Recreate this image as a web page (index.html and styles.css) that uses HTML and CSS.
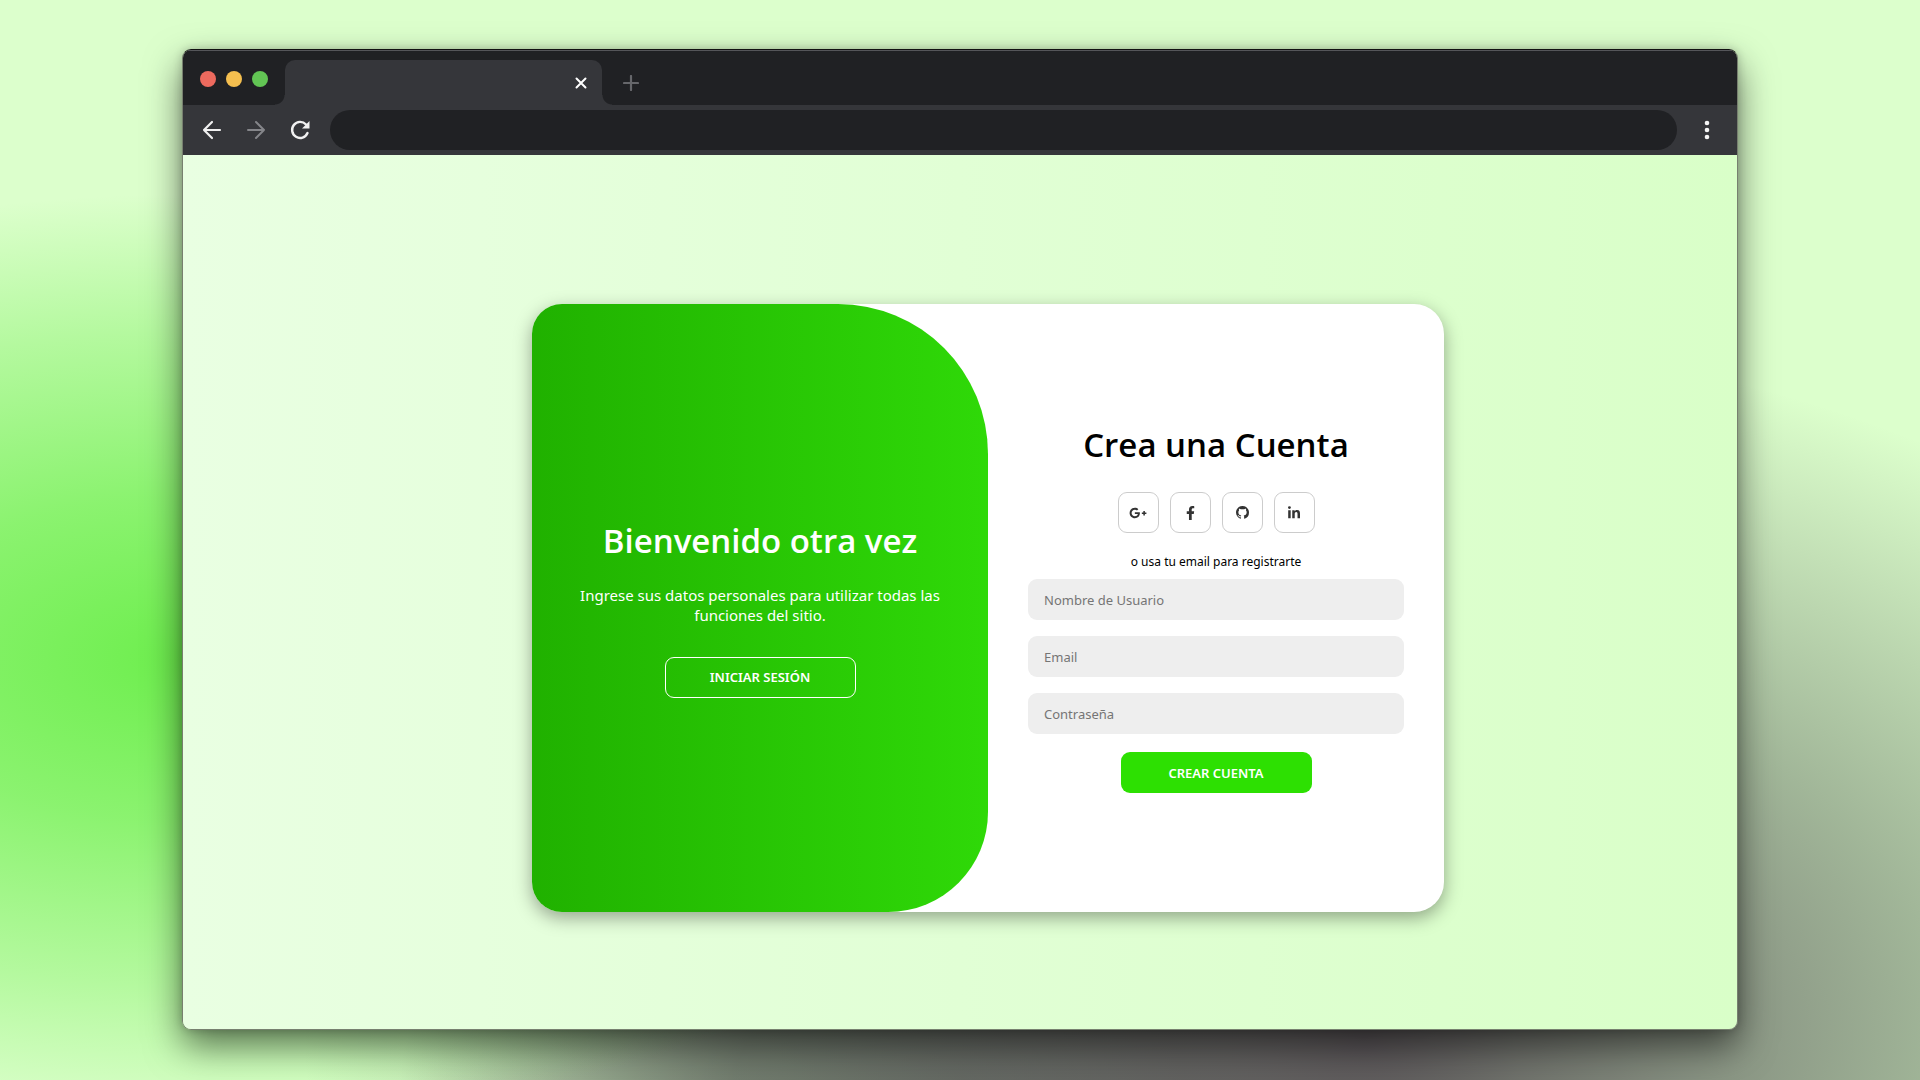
FILE: index.html
```html
<!DOCTYPE html>
<html lang="es">
<head>
<meta charset="utf-8">
<meta name="viewport" content="width=device-width, initial-scale=1">
<title>Crea una Cuenta</title>
<link rel="stylesheet" href="styles.css">
</head>
<body>
<div class="window">
  <header class="tabs">
    <div class="lights"><span class="light red"></span><span class="light yellow"></span><span class="light green"></span></div>
    <div class="tab">
      <button class="icon-button" type="button" aria-label="Cerrar pestaña"><svg width="12" height="12" viewBox="0 0 12 12"><path d="M1.500 1.500l9 9M10.500 1.500l-9 9" stroke="#fff" stroke-width="2" stroke-linecap="round"/></svg></button>
    </div>
    <button class="icon-button new-tab" type="button" aria-label="Nueva pestaña"><svg width="16" height="16" viewBox="0 0 16 16"><path d="M8 1v14M1 8h14" stroke="#66676b" stroke-width="2.200" stroke-linecap="round"/></svg></button>
  </header>
  <nav class="toolbar" aria-label="Navegación">
    <div class="nav-buttons">
      <button class="icon-button" type="button" aria-label="Atrás"><svg width="20" height="20" viewBox="0 0 20 20" fill="none" stroke="#f1f1f1" stroke-width="2.200" stroke-linecap="round" stroke-linejoin="round"><path d="M18 10H2M10 2L2 10l8 8"/></svg></button>
      <button class="icon-button" type="button" aria-label="Adelante"><svg width="20" height="20" viewBox="0 0 20 20" fill="none" stroke="#85868a" stroke-width="2" stroke-linecap="round" stroke-linejoin="round"><path d="M2 10h16M10 2l8 8-8 8"/></svg></button>
      <button class="icon-button" type="button" aria-label="Recargar"><svg width="20" height="20" viewBox="0 0 20 20"><path d="M16 4.500A8 8 0 1 0 17.500 13" fill="none" stroke="#f1f1f1" stroke-width="2.400" stroke-linecap="round"/><path d="M19.500 1v7.500H12z" fill="#f1f1f1"/></svg></button>
    </div>
    <input class="address" type="text" aria-label="Dirección">
    <button class="icon-button menu" type="button" aria-label="Menú"><svg width="6" height="20" viewBox="0 0 6 20" fill="#f5f5f5"><circle cx="3" cy="3" r="2.300"/><circle cx="3" cy="10" r="2.300"/><circle cx="3" cy="17" r="2.300"/></svg></button>
  </nav>
  <main class="page">
    <div class="card">
      <section class="welcome">
        <h1>Bienvenido otra vez</h1>
        <p>Ingrese sus datos personales para utilizar todas las funciones del sitio.</p>
        <button class="button outline" type="button">INICIAR SESIÓN</button>
      </section>
      <form class="signup">
        <h1>Crea una Cuenta</h1>
        <div class="social">
          <a href="#" aria-label="Google Plus"><svg width="18" height="14" viewBox="0 0 640 512"><path fill="#333" d="M386.061 228.496c1.834 9.692 3.143 19.384 3.143 31.956C389.204 370.205 315.599 448 204.800 448c-106.084 0-192-85.915-192-192s85.916-192 192-192c51.864 0 95.083 18.859 128.611 50.292l-52.126 50.030c-14.145-13.621-39.028-29.599-76.485-29.599-65.484 0-118.920 54.221-118.920 121.277 0 67.056 53.436 121.277 118.920 121.277 75.961 0 104.513-54.745 108.965-82.773H204.800v-66.009h181.261zm185.406 6.437V179.200h-56.001v55.733h-55.733v56.001h55.733v55.733h56.001v-55.733H627.200v-56.001h-55.733z"/></svg></a>
          <a href="#" aria-label="Facebook"><svg width="9" height="14" viewBox="0 0 320 512"><path fill="#333" d="M279.140 288l14.220-92.660h-88.910v-60.130c0-25.350 12.420-50.060 52.240-50.060h40.420V6.260S260.430 0 225.360 0c-73.220 0-121.080 44.380-121.080 124.720v70.620H22.890V288h81.390v224h100.170V288z"/></svg></a>
          <a href="#" aria-label="GitHub"><svg width="13" height="13" viewBox="0 0 16 16"><path fill="#333" d="M8 0C3.580 0 0 3.580 0 8c0 3.540 2.290 6.530 5.470 7.590.4.070.55-.17.55-.38 0-.19-.01-.82-.01-1.490-2.010.37-2.530-.49-2.690-.94-.09-.23-.48-.94-.82-1.130-.28-.15-.68-.52-.01-.53.63-.01 1.080.58 1.230.82.72 1.210 1.870.87 2.330.66.07-.52.28-.87.510-1.070-1.780-.2-3.640-.89-3.640-3.950 0-.87.310-1.590.82-2.150-.08-.2-.36-1.020.08-2.120 0 0 .67-.21 2.200.82.64-.18 1.320-.27 2-.27s1.360.09 2 .27c1.530-1.040 2.200-.82 2.200-.82.44 1.100.16 1.920.08 2.120.51.56.82 1.270.82 2.150 0 3.070-1.870 3.750-3.650 3.950.29.25.54.73.54 1.480 0 1.070-.01 1.930-.01 2.200 0 .21.15.46.55.38A8.010 8.010 0 0 0 16 8c0-4.420-3.580-8-8-8z"/></svg></a>
          <a href="#" aria-label="LinkedIn"><svg width="12" height="14" viewBox="0 0 448 512"><path fill="#333" d="M100.280 448H7.400V148.900h92.880zM53.790 108.100C24.090 108.100 0 83.500 0 53.800a53.790 53.790 0 0 1 107.580 0c0 29.700-24.100 54.300-53.790 54.300zM447.900 448h-92.680V302.400c0-34.700-.7-79.200-48.290-79.200-48.290 0-55.690 37.700-55.690 76.700V448h-92.780V148.900h89.080v40.800h1.300c12.400-23.500 42.690-48.300 87.880-48.300 94 0 111.280 61.900 111.280 142.300V448z"/></svg></a>
        </div>
        <p>o usa tu email para registrarte</p>
        <div class="fields">
          <input type="text" placeholder="Nombre de Usuario" aria-label="Nombre de Usuario">
          <input type="email" placeholder="Email" aria-label="Email">
          <input type="password" placeholder="Contraseña" aria-label="Contraseña">
        </div>
        <button class="button solid" type="button">CREAR CUENTA</button>
      </form>
    </div>
  </main>
</div>
</body>
</html>
```
FILE: styles.css
```css
* { box-sizing: border-box; }

body {
  margin: 0;
  min-height: 100vh;
  display: flex;
  padding: 49px 182px 50px;
  font-family: "Noto Sans", "Open Sans", sans-serif;
  background:
    radial-gradient(900px 465px at 10% 61%, #6dee4d, rgba(109, 238, 77, .73) 35%, rgba(109, 238, 77, .36) 70%, rgba(109, 238, 77, 0) 100%),
    radial-gradient(1060px 700px at 71% 96%, #5a5558, rgba(90, 88, 90, .62) 36%, rgba(90, 94, 90, .46) 54%, rgba(90, 94, 90, 0) 100%),
    radial-gradient(560px 300px at 50% 100%, rgba(80, 85, 80, .75), rgba(80, 85, 80, .65) 40%, rgba(80, 85, 80, 0) 100%),
    #dcffcc;
}

h1, p { margin: 0; }

.window {
  flex: 1;
  display: flex;
  flex-direction: column;
  border: 1px solid #77806f;
  border-top-color: #111;
  border-radius: 9px;
  overflow: hidden;
  box-shadow: 0 16px 36px rgba(0, 0, 0, .55), 0 0 10px rgba(0, 0, 0, .2);
}

.tabs {
  height: 55px;
  display: flex;
  align-items: flex-end;
  background: #202124;
  border-top: 1px solid #55565a;
}

.lights { display: flex; gap: 10px; padding: 0 17px 18px; }
.light { width: 16px; height: 16px; border-radius: 50%; }
.red { background: #ed6a5e; }
.yellow { background: #f5bf4f; }
.green { background: #62c554; }

.tab {
  position: relative;
  width: 317px;
  height: 45px;
  padding-right: 15px;
  display: flex;
  align-items: center;
  justify-content: flex-end;
  border-radius: 10px 10px 0 0;
  background: #35363a;
}
/* Curved feet where the tab meets the toolbar */
.tab::before, .tab::after {
  content: "";
  position: absolute;
  bottom: 0;
  width: 10px;
  height: 10px;
}
.tab::before { right: 100%; background: radial-gradient(circle at 0 0, transparent 9px, #35363a 10px); }
.tab::after { left: 100%; background: radial-gradient(circle at 100% 0, transparent 9px, #35363a 10px); }

.icon-button {
  display: flex;
  padding: 0;
  border: 0;
  background: none;
}
.new-tab { margin: 0 0 14px 21px; }

.toolbar {
  height: 50px;
  display: flex;
  align-items: center;
  gap: 20px;
  padding: 0 27px 0 19px;
  background: #35363a;
}
.nav-buttons { display: flex; gap: 24px; }
.address {
  flex: 1;
  height: 40px;
  border: 0;
  border-radius: 20px;
  background: #202124;
}
.menu { margin-left: 7px; }

.page {
  flex: 1;
  display: flex;
  align-items: center;
  justify-content: center;
  padding: 32px 0 0 56px;
  background: linear-gradient(to right, #e9ffe2, #d9ffc8);
}

.card {
  width: 912px;
  min-height: 608px;
  display: grid;
  grid-template-columns: 1fr 1fr;
  border-radius: 30px;
  background: #fff;
  overflow: hidden;
  box-shadow: 0 6px 18px rgba(0, 0, 0, .35);
}

h1 { font: 600 33px/48px "Open Sans", "Noto Sans", sans-serif; }

.welcome, .signup {
  display: flex;
  flex-direction: column;
  align-items: center;
  justify-content: center;
  padding: 0 40px 2px;
  text-align: center;
}
.welcome {
  color: #fff;
  border-radius: 0 150px 100px 0;
  background: linear-gradient(to right, #20b100, #2fd908);
}
.welcome p { margin: 20px 0 32px; font-size: 15px; line-height: 20px; }

.button {
  width: 191px;
  height: 41px;
  border-radius: 9px;
  font: 600 13px/20px "Noto Sans", "Open Sans", sans-serif;
  color: #fff;
}
.outline { border: 1px solid #fff; background: none; }
.solid { border: 0; background: #2de002; }

.social { display: flex; gap: 11px; margin: 23px 0 20px; }
.social a {
  width: 41px;
  height: 41px;
  display: flex;
  align-items: center;
  justify-content: center;
  border: 1px solid #ccc;
  border-radius: 9px;
}
.signup p { font-size: 12px; line-height: 18px; }

.fields {
  align-self: stretch;
  display: grid;
  gap: 16px;
  margin: 8px 0 18px;
}
.fields input {
  width: 100%;
  height: 41px;
  padding: 0 16px;
  border: 0;
  border-radius: 9px;
  background: #eee;
  font: 13px/20px "Noto Sans", "Open Sans", sans-serif;
}
.fields input::placeholder { color: #757575; }
```
